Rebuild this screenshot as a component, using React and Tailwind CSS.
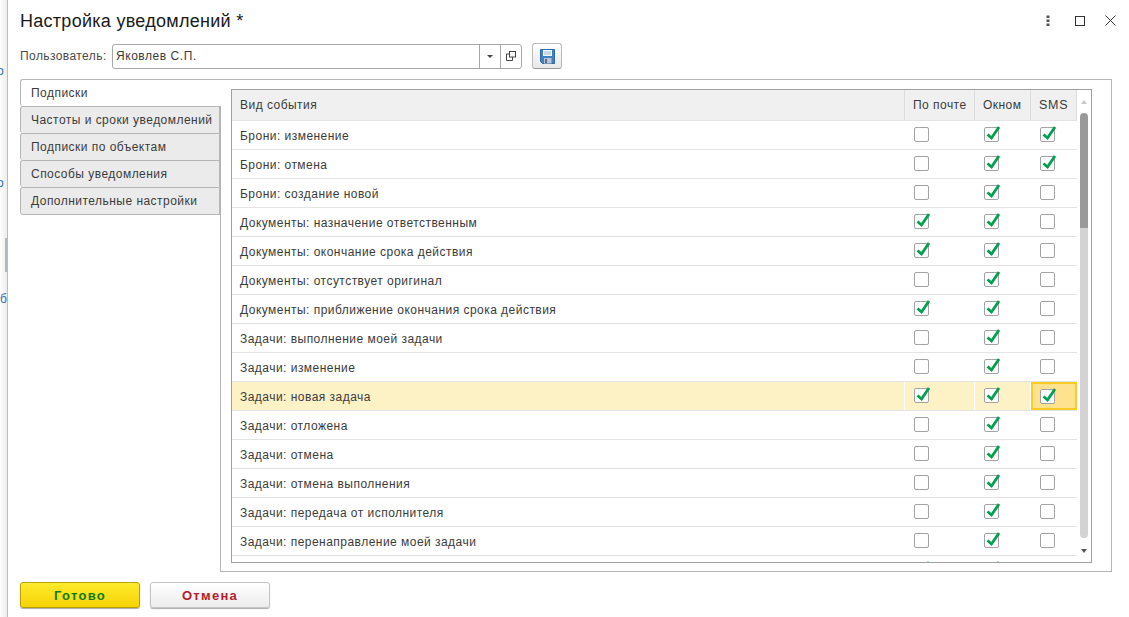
import React from 'react';

const rows = [
  ['Брони: изменение', 0, 1, 1],
  ['Брони: отмена', 0, 1, 1],
  ['Брони: создание новой', 0, 1, 0],
  ['Документы: назначение ответственным', 1, 1, 0],
  ['Документы: окончание срока действия', 1, 1, 0],
  ['Документы: отсутствует оригинал', 0, 1, 0],
  ['Документы: приближение окончания срока действия', 1, 1, 0],
  ['Задачи: выполнение моей задачи', 0, 1, 0],
  ['Задачи: изменение', 0, 1, 0],
  ['Задачи: новая задача', 1, 1, 1],
  ['Задачи: отложена', 0, 1, 0],
  ['Задачи: отмена', 0, 1, 0],
  ['Задачи: отмена выполнения', 0, 1, 0],
  ['Задачи: передача от исполнителя', 0, 1, 0],
  ['Задачи: перенаправление моей задачи', 0, 1, 0],
  ['Задачи: просрочена', 1, 1, 0],
];

const tabs = ['Частоты и сроки уведомлений', 'Подписки по объектам', 'Способы уведомления', 'Дополнительные настройки'];

function Check({ on }) {
  return (
    <div className="relative w-[15px] h-[15px] rounded-[2px] border border-[#a3a3a3] bg-white">
      {on ? (
        <svg className="absolute left-[-1px] top-[-1px] overflow-visible" width="17" height="17" viewBox="0 0 17 17" fill="none">
          <path d="M3.5 7.5 L7.5 11 L15 0" stroke="#00a04e" strokeWidth="2.8" />
        </svg>
      ) : null}
    </div>
  );
}

function Cell({ width, on, active, hl }) {
  const tone = active
    ? 'bg-[#fee28e] border-2 border-[#fccb24] pl-[7px]'
    : hl
      ? 'bg-[#fdf1c6] border-r border-white pl-[9px] pb-[1px]'
      : 'border-r border-transparent pl-[9px] pb-[1px]';
  return (
    <div className={`${width} h-full flex items-center ${tone}`}>
      <Check on={on} />
    </div>
  );
}

function Row({ row, index }) {
  const hl = index === 9;
  return (
    <div className="flex h-[29px] shrink-0 border-b border-[#e4e4e4]">
      <div className={`w-[673px] h-full pl-[8px] pt-[1px] flex items-center border-r ${hl ? 'bg-[#fdf1c6] border-white' : 'border-transparent'}`}>
        {row[0]}
      </div>
      <Cell width="w-[70px]" on={row[1]} hl={hl} />
      <Cell width="w-[56px]" on={row[2]} hl={hl} />
      <Cell width="w-[46px]" on={row[3]} hl={hl} active={hl} />
    </div>
  );
}

function HeadCell({ width, children }) {
  return (
    <div className={`${width} h-full pl-[8px] flex items-center bg-[#f0f0f0] border-r border-[#dcdcdc]`}>
      {children}
    </div>
  );
}

function SaveIcon() {
  return (
    <svg width="15" height="15" viewBox="0 0 15 15">
      <path d="M0.5 0.5 H14.5 V14.5 H2.5 L0.5 12.5 Z" fill="#3f7fc4" stroke="#2c69ad" />
      <rect x="3" y="1" width="9" height="6" fill="#f4f7fb" />
      <path d="M4 3 H11 M4 5 H11" stroke="#9db8d6" />
      <rect x="4" y="9" width="7.5" height="5.5" fill="#bcc6d0" />
      <rect x="5" y="10" width="2" height="4" fill="#5b6d80" />
    </svg>
  );
}

export default function App() {
  return (
    <div className="flex w-[1129px] h-[617px] overflow-hidden bg-white text-[12px] text-[#3b3b3b] tracking-[0.47px] font-['Liberation_Sans',Arial,sans-serif]">
      {/* кусок страницы под окном */}
      <div className="relative w-[8px] shrink-0 bg-gradient-to-r from-white to-[#ececec] border-r border-[#bdbdbd] overflow-hidden text-[#2a6fc0] underline">
        <span className="absolute left-[-3px] top-[62px]">р</span>
        <span className="absolute left-[-3px] top-[174px]">о</span>
        <span className="absolute left-[0px] top-[290px]">б</span>
        <div className="absolute right-0 top-[238px] w-[2px] h-[34px] bg-[#aeb8c4]" />
      </div>

      <div className="flex-1 flex flex-col pl-[12px] pr-[17px]">
        <div className="flex items-center h-[43px] shrink-0">
          <h1 className="flex-1 text-[18px] tracking-[0.28px] text-[#1a1a1a] font-normal">Настройка уведомлений *</h1>
          <div className="flex items-center mb-[2px] -mr-[4px]">
            <svg width="4" height="12" viewBox="0 0 4 12" fill="#555">
              <rect x="0.5" y="0.5" width="3" height="2.5" />
              <rect x="0.5" y="4.5" width="3" height="2.5" />
              <rect x="0.5" y="8.5" width="3" height="2.5" />
            </svg>
            <div className="ml-[25px] w-[10px] h-[10px] border border-[#333]" />
            <svg className="ml-[20px]" width="11" height="11" viewBox="0 0 11 11" stroke="#333" fill="none">
              <path d="M0.5 0.5 L10.5 10.5 M10.5 0.5 L0.5 10.5" />
            </svg>
          </div>
        </div>

        <div className="flex items-center h-[26px] shrink-0">
          <span className="w-[92px] text-[#4a4a4a] tracking-[0.42px]">Пользователь:</span>
          <div className="w-[410px] h-[25px] flex items-center rounded-[3px] border border-[#a8a8a8]">
            <span className="flex-1 pl-[3px] tracking-[0.55px]">Яковлев С.П.</span>
            <div className="w-[21px] h-full flex items-center justify-center border-l border-[#a8a8a8]">
              <div className="w-0 h-0 border-x-[3px] border-x-transparent border-t-[3px] border-t-[#444]" />
            </div>
            <div className="w-[21px] h-full flex items-center justify-center border-l border-[#a8a8a8]">
              <svg width="10" height="10" viewBox="0 0 10 10" fill="none" stroke="#444">
                <rect x="3.5" y="0.5" width="6" height="5.5" />
                <path d="M3.5 3 H0.5 V9.5 H6.5 V6" />
              </svg>
            </div>
          </div>
          <button className="ml-[10px] w-[30px] h-[26px] flex items-center justify-center rounded-[3px] border border-[#bbb] border-b-[#999] bg-gradient-to-b from-white to-[#e8e8e8]">
            <SaveIcon />
          </button>
        </div>

        <div className="flex mt-[10px] h-[493px] shrink-0">
          <div className="w-[200px] shrink-0 flex flex-col">
            <div className="relative z-10 w-[201px] h-[27px] pl-[10px] flex items-center bg-white rounded-l-[3px] border-l border-t border-[#b5b5b5]">Подписки</div>
            {tabs.map((t) => (
              <div key={t} className="h-[27px] pl-[10px] flex items-center bg-[#ebebeb] rounded-l-[3px] border border-[#b5b5b5] border-b-0 last:border-b last:h-[28px] whitespace-nowrap">
                {t}
              </div>
            ))}
          </div>

          <div className="flex-1 border border-[#b5b5b5] pl-[10px] pr-[19px] pt-[9px] pb-[9px]">
            <div className="h-[474px] flex border border-[#a0a0a0]">
              <div className="w-[845px] flex flex-col overflow-hidden shrink-0">
                <div className="flex h-[31px] shrink-0 border-b border-[#e4e4e4]">
                  <HeadCell width="w-[673px]">Вид события</HeadCell>
                  <HeadCell width="w-[70px]">По почте</HeadCell>
                  <HeadCell width="w-[56px]">Окном</HeadCell>
                  <HeadCell width="w-[46px]"><span className="text-[12.5px] tracking-[0.7px]">SMS</span></HeadCell>
                </div>
                {rows.map((row, i) => (
                  <Row key={row[0]} row={row} index={i} />
                ))}
              </div>
              <div className="flex-1 flex flex-col items-center pt-[10px]">
                <div className="w-0 h-0 border-x-[3px] border-x-transparent border-b-[4px] border-b-[#c8c8c8]" />
                <div className="w-[8px] h-[115px] mt-[9px] bg-[#999] rounded-t-[4px]" />
                <div className="w-[8px] h-[310px] bg-[#d3d3d3] rounded-b-[4px]" />
                <div className="mt-[11px] w-0 h-0 border-x-[3px] border-x-transparent border-t-[4px] border-t-[#555]" />
              </div>
            </div>
          </div>
        </div>

        <div className="flex gap-[10px] mt-[10px] text-[13px] font-bold tracking-[1.3px]">
          <button className="w-[120px] h-[26px] pt-[1px] rounded-[3px] border border-[#b8a000] bg-gradient-to-b from-[#ffeb2a] to-[#f6d300] text-[#0c7c10] shadow-[0_1px_1px_#aaa]">Готово</button>
          <button className="w-[120px] h-[26px] pt-[1px] rounded-[3px] border border-[#c4c4c4] bg-gradient-to-b from-white to-[#ececec] text-[#b3202a] shadow-[0_1px_1px_#aaa]">Отмена</button>
        </div>
      </div>
    </div>
  );
}
